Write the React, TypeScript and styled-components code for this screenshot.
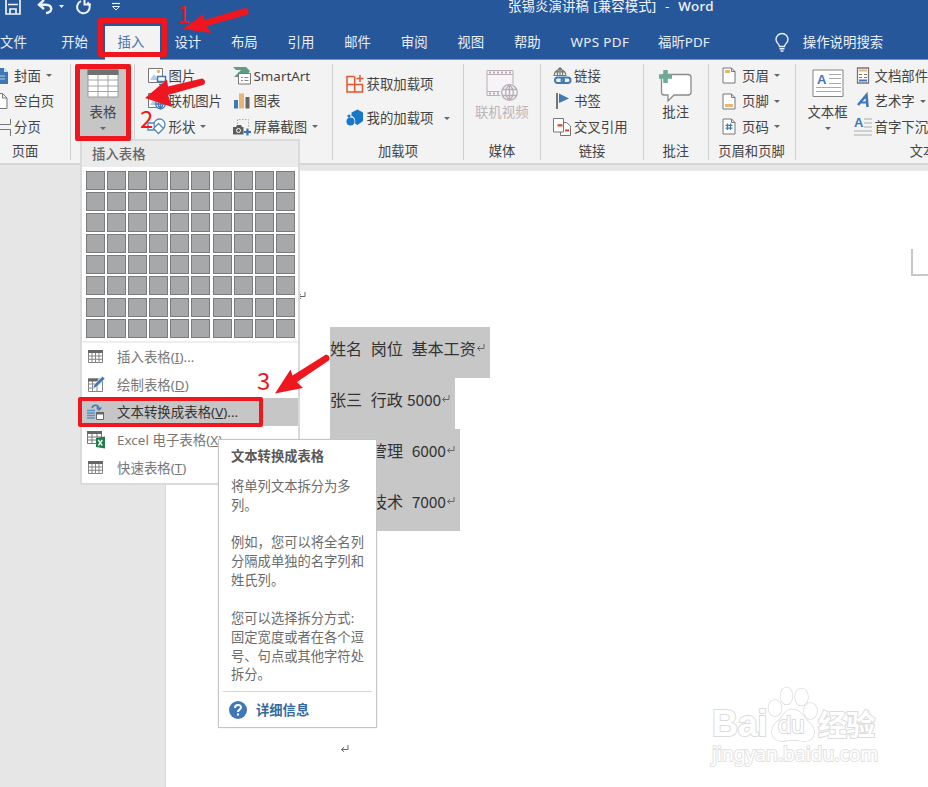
import React from "react";
import styled, { createGlobalStyle } from "styled-components";

const Global = createGlobalStyle`
  *, *::before, *::after { box-sizing: border-box; }
  body { margin: 0; overflow: hidden; }
  svg { display: block; flex: none; overflow: visible; }
`;

const Window = styled.div`
  position: relative;
  width: 928px;
  height: 787px;
  overflow: hidden;
  display: flex;
  flex-direction: column;
  background: #e6e6e6;
  color: #444;
  font: 13.4px/18px "Noto Sans", "Noto Sans CJK SC", sans-serif;
  white-space: nowrap;
`;

/* ---------- header ---------- */
const TitleBar = styled.header`
  height: 24px;
  flex: none;
  display: flex;
  background: #27579b;
  color: #f1f5fa;
`;
const QuickAccess = styled.div`
  width: 508px;
  padding-left: 5px;
`;
const Title = styled.div`
  padding-top: 0;
  font-size: 13.4px;
  line-height: 12px;
  letter-spacing: 0.1px;
  word-spacing: 0.8px;
`;
const AppName = styled.span`
  font-weight: 500;
  letter-spacing: 0.4px;
`;
const TabRow = styled.nav`
  height: 36px;
  flex: none;
  display: flex;
  padding-top: 2px;
  background: #27579b;
  border-bottom: 1px solid #7896c3;
`;
const Tab = styled.div<{ $w?: number; $first?: boolean; $active?: boolean; $track?: number }>`
  width: ${(p) => p.$w ?? 56.6}px;
  height: 34px;
  padding: 7px 0 0 ${(p) => (p.$first ? 0 : 14.2)}px;
  letter-spacing: ${(p) => p.$track ?? 0}px;
  ${(p) => p.$active && "width: 55px; margin-left: 1px; margin-right: .6px; padding-left: 13px;"}
  color: ${(p) => (p.$active ? "#4a73ae" : "#e8eff8")};
  background: ${(p) => (p.$active ? "#f3f3f3" : "transparent")};
`;
const Search = styled.div`
  display: flex;
  gap: 14px;
  margin-left: 44.5px;
  color: #eef3fa;
  padding-top: 7px;
`;

/* ---------- ribbon ---------- */
const Ribbon = styled.section`
  height: 105px;
  flex: none;
  display: flex;
  padding-top: 4px;
  background: #f3f3f3;
  border-bottom: 2px solid #d6d6d6;
`;
const Group = styled.div<{ $w: number }>`
  width: ${(p) => p.$w}px;
  height: 96px;
  flex: none;
  display: flex;
  flex-direction: column;
  border-right: 1.5px solid #d0d0d0;
`;
const GroupBody = styled.div<{ $pad?: number }>`
  height: 80px;
  display: flex;
  padding-left: ${(p) => p.$pad ?? 0}px;
`;
const GroupLabel = styled.div<{ $shift?: number }>`
  text-align: center;
  font-size: 13.3px;
  text-indent: ${(p) => p.$shift ?? 0}px;
`;
const Stack = styled.div<{ $w?: number; $pitch?: number; $top?: number; $left?: number }>`
  display: grid;
  grid-auto-rows: ${(p) => p.$pitch ?? 25.5}px;
  width: ${(p) => (p.$w ? p.$w + "px" : "auto")};
  padding-top: ${(p) => p.$top ?? 0}px;
  padding-left: ${(p) => p.$left ?? 0}px;
  align-content: start;
`;
const Cmd = styled.div<{ $icon?: number }>`
  display: flex;
  align-items: center;
  padding-bottom: 2px;
  & > svg:first-child { margin-right: ${(p) => p.$icon ?? 3}px; }
`;
const BigButton = styled.div<{ $w: number; $active?: boolean; $disabled?: boolean }>`
  width: ${(p) => p.$w}px;
  height: 76px;
  padding-top: 5px;
  display: flex;
  flex-direction: column;
  align-items: center;
  color: ${(p) => (p.$disabled ? "#b9b5b8" : "#444")};
  background: ${(p) => (p.$active ? "#c6c6c6" : "transparent")};
  & > svg:first-child { height: 36px; margin-bottom: -2px; }
`;
const Caret = styled.i<{ $gap?: number }>`
  border: 3px solid transparent;
  border-top: 3.5px solid #666;
  border-bottom: 0;
  margin-left: ${(p) => p.$gap ?? 5}px;
`;
const DownCaret = styled(Caret)`
  margin: 6px 0 0;
`;

/* ---------- document ---------- */
const Workspace = styled.main`
  flex: 1;
  padding: 5px 0 0 165px;
`;
const Page = styled.article`
  height: 100%;
  padding: 156px 0 0 164px;
  background: #fff;
  border-left: 1px solid #d9d9d9;
  border-top: 1px solid #ececec;
  color: #333;
  font: 16.1px/24px "Noto Sans CJK SC", sans-serif;
`;
const Line = styled.div<{ $w: number; $indent?: number }>`
  width: ${(p) => p.$w}px;
  height: 51px;
  display: flex;
  align-items: flex-start;
  gap: 8.5px;
  padding: 8.5px 0 0 ${(p) => p.$indent ?? 0}px;
  background: #c7c7c7;
`;
const Amount = styled.span<{ $pull?: boolean }>`
  display: flex;
  align-items: center;
  margin-left: ${(p) => (p.$pull ? -4.5 : 0)}px;
`;
const Digits = styled.span`
  font: 15.6px/24px "Noto Sans CJK SC", sans-serif;
  letter-spacing: -0.1px;
`;
const LastMark = styled.div`
  padding: 213px 0 0 10px;
`;

/* ---------- dropdown ---------- */
const Menu = styled.section`
  position: absolute;
  left: 80px;
  top: 139px;
  width: 220px;
  height: 346px;
  background: #fff;
  border: 2px solid #dadada;
  color: #777;
`;
const MenuHead = styled.h2`
  margin: 0;
  height: 26px;
  padding: 4px 0 0 10px;
  background: #ebebeb;
  color: #666;
  font-size: 13.4px;
  line-height: 18px;
  font-weight: 500;
`;
const Cells = styled.div`
  display: grid;
  grid-template-columns: repeat(10, 19px);
  grid-auto-rows: 19px;
  gap: 2.1px;
  height: 176px;
  padding: 4px 0 0 4px;
  border-bottom: 2px solid #eee;
`;
const Cell = styled.i`
  background: #a7a8aa;
  border: 1.5px solid #7b7b7c;
`;
const MenuItem = styled.div<{ $on?: boolean }>`
  height: 27.7px;
  display: flex;
  align-items: center;
  padding-left: 5px;
  gap: 13px;
  background: ${(p) => (p.$on ? "#c6c6c6" : "#fff")};
  color: ${(p) => (p.$on ? "#333" : "#777")};
  u { text-underline-offset: 1px; text-decoration-thickness: 1px; }
`;
const MenuText = styled.span`
  letter-spacing: 0.05px;
`;

/* ---------- tooltip ---------- */
const Tip = styled.aside`
  position: absolute;
  left: 218px;
  top: 439px;
  width: 159px;
  height: 289px;
  padding: 7px 4px 0;
  background: #fff;
  border: 1px solid #c4c4c4;
  box-shadow: 0 0 1px #ccc;
  color: #6b6b6b;
  line-height: 18.85px;
  font-size: 13.3px;
`;
const TipTitle = styled.h3`
  margin: 0 0 11px 8px;
  font-size: 13.3px;
  line-height: 19px;
  font-weight: 600;
  color: #595959;
`;
const TipText = styled.p`
  margin: 0 0 18.8px 8px;
`;
const TipFoot = styled.div`
  display: flex;
  align-items: center;
  gap: 9px;
  height: 37px;
  margin-top: -12px;
  padding-left: 6px;
  border-top: 1px solid #d8d8d8;
  color: #35689f;
  font-weight: 700;
`;

/* ---------- annotations ---------- */
const Marker = styled.div<{ $x: number; $y: number; $w: number; $h: number; $b?: number }>`
  position: absolute;
  left: ${(p) => p.$x}px;
  top: ${(p) => p.$y}px;
  width: ${(p) => p.$w}px;
  height: ${(p) => p.$h}px;
  border: ${(p) => p.$b ?? 4}px solid #ee1720;
  border-radius: 2px;
`;
const Step = styled.span<{ $x: number; $y: number }>`
  position: absolute;
  left: ${(p) => p.$x}px;
  top: ${(p) => p.$y}px;
  color: #ee1720;
  font: 24px/24px "Noto Sans CJK SC", sans-serif;
`;
const Arrows = styled.svg`
  position: absolute;
  left: 0;
  top: 0;
`;
const StrayMark = styled.div`
  position: absolute;
  left: 297px;
  top: 291px;
`;
const Corner = styled.div`
  position: absolute;
  right: 0;
  top: 249px;
  width: 17px;
  height: 27px;
  border-left: 2px solid #c8c8c8;
  border-bottom: 2px solid #c8c8c8;
`;
const Watermark = styled.div`
  position: absolute;
  left: 712px;
  top: 686px;
  width: 170px;
  height: 82px;
  color: #fff;
  -webkit-text-stroke: 2px #dcdcdc;
  paint-order: stroke fill;
`;
const Brand = styled.div`
  display: flex;
  height: 56px;
  padding-top: 18px;
  font: 700 36px/40px "Liberation Sans", sans-serif;
`;
const Bai = styled.span`
  width: 58px;
  letter-spacing: -0.3px;
`;
const Paw = styled.span`
  position: relative;
  width: 48px;
`;
const PawArt = styled.svg`
  position: absolute;
  left: -2px;
  top: -18px;
`;
const Du = styled.span`
  position: absolute;
  left: 8px;
  top: 3px;
  font-size: 24px;
  line-height: 36px;
  font-weight: 400;
`;
const Jingyan = styled.span`
  font: 700 29px/38px "Noto Sans CJK SC", sans-serif;
  letter-spacing: -0.8px;
`;
const Site = styled.div`
  font: 19.2px/24px "Noto Sans", sans-serif;
  -webkit-text-stroke-color: #e2e2e2;
`;

/* ---------- icons ---------- */
const Ret = () => (
  <svg width="10" height="10" viewBox="0 0 10 10" fill="none" stroke="#666" strokeWidth="1">
    <path d="M8 1v4.5H1.5M4 3.2 1.5 5.5 4 7.8" />
  </svg>
);
const TableIcon = () => (
  <svg width="17" height="15" viewBox="0 0 17 15">
    <path d="M1.5 1.5h14v12h-14zM1.5 7h14M1.5 10.3h14M5 3v10.5M8.5 3v10.5M12 3v10.5" fill="#fff" stroke="#858585" strokeWidth="1" />
    <path d="M1 1h15v3H1z" fill="#666" />
  </svg>
);
const DrawIcon = () => (
  <svg width="17" height="17" viewBox="0 0 17 17">
    <path d="M1.5 3h14v12.5h-14zM1.5 8h9M1.5 12h6M5.5 5v10M10 9v6.5" fill="#fff" stroke="#858585" />
    <path d="M1 2.5h10v3H1z" fill="#666" />
    <path d="m6 12.500 1-3.800 8.500-8.500 2.500 2.500-8.500 8.300z" fill="#4179b5" stroke="#fff" strokeWidth=".6" />
  </svg>
);
const ConvertIcon = () => (
  <svg width="17" height="17" viewBox="0 0 17 17" fill="none">
    <path d="M0 6.5h8M0 9h8M0 11.5h8M0 14h8" stroke="#5c8ec4" strokeWidth="1.4" />
    <path d="M5 4C6 .5 11 .3 12 4.5M9.7 3.5 12 6l2.4-2.5" stroke="#4179b5" strokeWidth="1.5" />
    <path d="M9.5 8.500h7v7h-7z" fill="#fff" stroke="#666" />
    <path d="M9 8h8v2.500H9z" fill="#666" />
  </svg>
);
const ExcelIcon = () => (
  <svg width="17" height="17" viewBox="0 0 17 17">
    <path d="M.5 1.500h14v11H.5zM.5 6h14M.5 9h10M5 3v9M10 3v9" fill="#fff" stroke="#777" />
    <path d="M0 0h15v3H0z" fill="#666" />
    <path d="m9 7 9-1.500v12L9 16z" fill="#217d4b" />
    <path d="m11.300 9 4 5.500M15.300 9l-4 5.500" stroke="#fff" strokeWidth="1.300" />
  </svg>
);
const BigTable = () => (
  <svg width="32" height="36" viewBox="0 0 32 36">
    <path d="M1 1h30v27H1z" fill="#fff" stroke="#999" />
    <path d="M1 11h30M1 17h30M1 22.500h30M11 5v23M21 5v23" stroke="#a4a4a4" />
    <path d="M.5.5h31V6H.5z" fill="#717171" />
  </svg>
);
const Cover = () => (
  <svg width="9" height="18" viewBox="8 0 9 18">
    <path d="M8 1h4l4 4v12H8z" fill="#3f78b5" />
    <path d="M12 1v4h4" fill="#d8e5f3" />
    <path d="M8 9h5M8 12h5" stroke="#b9d0e8" />
  </svg>
);
const Blank = () => (
  <svg width="9" height="18" viewBox="8 0 9 18" fill="#fff" stroke="#777">
    <path d="M8 1.500h2.500L15 6v10.500H8M10.500 1.500V6H15" />
  </svg>
);
const Break = () => (
  <svg width="12" height="18" viewBox="0 0 12 18" fill="none" stroke="#777">
    <path d="M0 6.500h10.500V1M0 11.500h10.500V18" />
  </svg>
);
const Picture = () => (
  <svg width="20" height="18" viewBox="0 0 20 18">
    <path d="M1.500 1.500h14v14h-14z" fill="#fff" stroke="#777" />
    <path d="m3 13 4-6 4 6z" fill="#b4cde3" />
    <circle cx="11.500" cy="4.500" r="1.700" fill="#e9b66d" />
    <path d="M10.500 9.500h8v5h-8zM12 17.500h5" fill="#fff" stroke="#3f78b5" strokeWidth="1.500" />
  </svg>
);
const OnlinePicture = () => (
  <svg width="20" height="18" viewBox="0 0 20 18">
    <path d="M1.500 1.500h14v14h-14z" fill="#fff" stroke="#777" />
    <path d="m3 13 4-6 4 6z" fill="#b4cde3" />
    <g fill="#fff" stroke="#3f78b5" strokeWidth="1.300">
      <circle cx="13.500" cy="12" r="4.800" />
      <path d="M8.700 12h9.600M13.500 7.200v9.600M13.500 7.200c-3 3-3 6.600 0 9.600 3-3 3-6.600 0-9.600" />
    </g>
  </svg>
);
const Shapes = () => (
  <svg width="20" height="18" viewBox="0 0 20 18" fill="#fff" stroke="#4f87c0" strokeWidth="1.300">
    <path d="M1 5h7v7H1z" />
    <circle cx="12.500" cy="6.500" r="5.500" />
    <path d="m11.500 5.500 5 5-5 5-5-5z" />
  </svg>
);
const SmartArt = () => (
  <svg width="18" height="18" viewBox="0 0 18 18">
    <path d="M0 0h13l4 4-1.500 2H5l3-3H3z" fill="#5e9c85" />
    <path d="m1 10 5-5v5z" fill="#5e9c85" />
    <path d="M5.500 6.500h12v10.500h-12z" fill="#fff" stroke="#777" />
    <path d="M8 10.500h2m1.500 0h4M8 13.500h2m1.500 0h4" stroke="#888" />
  </svg>
);
const Chart = () => (
  <svg width="18" height="18" viewBox="0 0 18 18">
    <path d="M1 8h4v8.500H1z" fill="#3f78b5" />
    <path d="M6 1.500h5v15H6z" fill="#e7b676" />
    <path d="M12.500 5h4v11.500h-4z" fill="#666" />
  </svg>
);
const Screenshot = () => (
  <svg width="18" height="18" viewBox="0 0 18 18">
    <path d="M4.500 6V1.500h11V9" fill="none" stroke="#aaa" strokeDasharray="1.500 1.500" />
    <path d="M0 9h3l1-2h4l1 2h1.500v7.500H0z" fill="#5e5e5e" />
    <circle cx="5.500" cy="12.500" r="2" fill="#5e5e5e" stroke="#fff" />
    <path d="M14.500 10.500v7M11 14h7" stroke="#3272b5" strokeWidth="2.200" />
  </svg>
);
const GetAddins = () => (
  <svg width="18" height="18" viewBox="0 0 18 18" fill="none" stroke="#df5831" strokeWidth="1.500">
    <path d="M8.500 1.500H1v15.500h15.500V9.500H1M8.700 1.500V17M14 0v7M10.500 3.500h7" />
  </svg>
);
const MyAddins = () => (
  <svg width="18" height="18" viewBox="0 0 18 18" fill="#1777c8">
    <path d="M5.500 3.500 11.500.500 17 3.500v8.500l-5.500 4L9 14.500C10 10 8 7.500 5.500 7z" />
    <circle cx="4.500" cy="12.500" r="4" />
    <circle cx="3" cy="7" r="1.600" />
  </svg>
);
const Video = () => (
  <svg width="32" height="36" viewBox="0 0 32 36" fill="#f7f3f7" stroke="#b9aeb7">
    <path d="M1 1.500h26v25H1zM1 5.500h26M1 22.500h26" />
    <path d="M3 3.500h23M3 24.500h12" strokeDasharray="2 2" strokeWidth="2" />
    <circle cx="23" cy="23.500" r="9" stroke="#f3f3f3" fill="#f3f3f3" />
    <g strokeWidth="1.300">
      <circle cx="23.500" cy="23.500" r="7.800" />
      <path d="M16.500 20.500h14M16.500 26.500h14M23.500 16v15M23.500 16c-5 4-5 11 0 15 5-4 5-11 0-15" fill="none" />
    </g>
  </svg>
);
const LinkIcon = () => (
  <svg width="18" height="18" viewBox="0 0 18 18" fill="none">
    <g stroke="#777" strokeWidth="1.200">
      <path d="M1 9a6 6.500 0 1 1 12 0M1 8.500h12M1.800 4.800h10.400M7 0v9M7 .5C4 3 4 6 4.500 9M7 .5C10 3 10 6 9.500 9" />
    </g>
    <path d="M1.500 9h17v8h-17z" fill="#f3f3f3" />
    <g stroke="#3f78b5" strokeWidth="2">
      <rect x="2" y="10.500" width="9" height="5.500" rx="2.700" />
      <rect x="8.500" y="10.500" width="9" height="5.500" rx="2.700" />
    </g>
  </svg>
);
const Flag = () => (
  <svg width="18" height="18" viewBox="0 0 18 18">
    <path d="M4 1v16" stroke="#555" strokeWidth="1.600" />
    <path d="m6 1.500 10 5L6 11z" fill="#3f78b5" />
  </svg>
);
const CrossRef = () => (
  <svg width="18" height="18" viewBox="0 0 18 18" fill="#fff" stroke="#777">
    <path d="M7.500 4.500h6l4 3.500v9.500h-10z" />
    <path d="M.5.5h10V14H.500z" />
    <path d="M4.500 7.300h5M12 12.500h4" stroke="#d94c24" strokeWidth="2.200" />
  </svg>
);
const Comment = () => (
  <svg width="34" height="36" viewBox="0 0 34 36">
    <path d="M5 5.500h24q3 0 3 3V23q0 3-3 3H15l-6 6v-6H5q-2.500 0-2.500-3V8.500q0-3 2.500-3z" fill="#fff" stroke="#8a8a8a" strokeWidth="1.300" />
    <path d="M6.500 1v13M0 7.500h13" stroke="#6faa94" strokeWidth="4.500" />
  </svg>
);
const PageIcon = ({ kind }: { kind: "head" | "foot" | "num" }) => (
  <svg width="14" height="17" viewBox="0 0 14 17">
    <path d="M1 1h8.500L13 4.500V16H1zM9.500 1v3.500H13" fill="#fff" stroke="#777" />
    {kind === "head" && <path d="M3 3h5v3H3z" fill="#e9b66d" />}
    {kind === "foot" && <path d="M3 11h8v3H3z" fill="#e9b66d" />}
    {kind === "num" && <path d="M5.500 5.500v6.500M8.500 5.500v6.500M3.500 7.300h7M3.500 10.200h7" stroke="#3f78b5" strokeWidth="1.200" />}
  </svg>
);
const SvgLetter = styled.text`
  font: bold 13px "Liberation Sans", sans-serif;
  fill: #4179b5;
`;
const TextBox = () => (
  <svg width="32" height="36" viewBox="0 0 32 36">
    <path d="M1 1h30v26.500H1z" fill="#fff" stroke="#858585" />
    <path d="M17 5.500h12M17 9.500h12M17 14.500h12M4 18.500h25M4 22.500h25" stroke="#aaa" />
    <SvgLetter x="5" y="15">A</SvgLetter>
  </svg>
);
const Parts = () => (
  <svg width="18" height="18" viewBox="0 0 18 18">
    <path d="M3.500 1h11v15h-11z" fill="#fff" stroke="#777" strokeWidth="1.300" />
    <path d="M5 3.500h8" stroke="#e9b66d" strokeWidth="2" />
    <path d="M5 7.500h3m2 0h3m-8 3h3m2 0h3" stroke="#777" />
    <path d="M5 13.500h8" stroke="#3f78b5" strokeWidth="2" />
  </svg>
);
const WordArt = () => (
  <svg width="18" height="18" viewBox="0 0 18 18" fill="none" stroke="#3f78b5">
    <path d="m4 13 8.500-10L13.500 15" strokeWidth="2.600" />
    <path d="M7 10.500h6" strokeWidth="2" />
  </svg>
);
const DropCap = () => (
  <svg width="18" height="18" viewBox="0 0 18 18">
    <SvgLetter x="0" y="9">A</SvgLetter>
    <path d="M10 1h8M10 5h8M10 9h8M0 13h18M0 17h18" stroke="#aaa" />
  </svg>
);

const tableMenu = [
  { icon: <TableIcon />, label: "插入表格", k: "I", dots: true },
  { icon: <DrawIcon />, label: "绘制表格", k: "D" },
  { icon: <ConvertIcon />, label: "文本转换成表格", k: "V", dots: true, on: true },
  { icon: <ExcelIcon />, label: "Excel 电子表格", k: "X" },
  { icon: <TableIcon />, label: "快速表格", k: "T" },
];

export default function App() {
  return (
    <Window>
      <Global />
      <TitleBar>
        <QuickAccess>
          <svg width="120" height="20" viewBox="0 0 120 20" fill="none" stroke="#eef3fa" strokeWidth="1.700">
            <path d="M1 0v14h14V0M3 4.500h10M5 14V9h6v5" />
            <path d="M39 0l-5 4.700 5 4.300M34 4.700h7c7 0 7 8.300 0 8.300" strokeWidth="2.400" />
            <path d="m54 5 5 0-2.500 3z" fill="#eef3fa" stroke="none" />
            <path d="M76 1.200a6.300 6.300 0 1 0 6.500 1M79.500 -1v5.500H86" strokeWidth="2" />
            <path d="M107 3.500h8" strokeWidth="1.200" />
            <path d="M107.500 6.500h7L111 10z" strokeWidth="1" />
          </svg>
        </QuickAccess>
        <Title>张锡炎演讲稿 [兼容模式]&nbsp; -&nbsp; <AppName>Word</AppName></Title>
      </TitleBar>
      <TabRow>
        <Tab $w={47} $first>文件</Tab>
        <Tab>开始</Tab>
        <Tab $active>插入</Tab>
        {["设计", "布局", "引用", "邮件", "审阅", "视图", "帮助"].map((t) => (
          <Tab key={t}>{t}</Tab>
        ))}
        <Tab $w={87.500} $track={0.350}>WPS PDF</Tab>
        <Tab $w={86.500}>福昕PDF</Tab>
        <Search>
          <svg width="14" height="20" viewBox="0 0 14 20" fill="none" stroke="#e8eff8" strokeWidth="1.400">
            <path d="M4.500 13.500C4.500 11 1 10 1 6.500a6 6 0 0 1 12 0c0 3.500-3.500 4.500-3.500 7zM4.500 15.700h5M5.500 18h3" />
          </svg>
          操作说明搜索
        </Search>
      </TabRow>

      <Ribbon>
        <Group $w={71}>
          <GroupBody>
            <Stack>
              <Cmd $icon={5}><Cover />封面<Caret /></Cmd>
              <Cmd $icon={5}><Blank />空白页</Cmd>
              <Cmd $icon={2}><Break />分页</Cmd>
            </Stack>
          </GroupBody>
          <GroupLabel $shift={-20}>页面</GroupLabel>
        </Group>
        <Group $w={64}>
          <GroupBody $pad={4.500}>
            <BigButton $w={55} $active><BigTable />表格<DownCaret /></BigButton>
          </GroupBody>
        </Group>
        <Group $w={198}>
          <GroupBody $pad={11.500}>
            <Stack $w={86}>
              <Cmd $icon={2}><Picture />图片</Cmd>
              <Cmd $icon={2}><OnlinePicture />联机图片</Cmd>
              <Cmd $icon={2}><Shapes />形状<Caret /></Cmd>
            </Stack>
            <Stack>
              <Cmd $icon={3}><SmartArt />SmartArt</Cmd>
              <Cmd $icon={3}><Chart />图表</Cmd>
              <Cmd $icon={3}><Screenshot />屏幕截图<Caret /></Cmd>
            </Stack>
          </GroupBody>
        </Group>
        <Group $w={131}>
          <GroupBody $pad={12.500}>
            <Stack $pitch={34} $top={4}>
              <Cmd $icon={3}><GetAddins />获取加载项</Cmd>
              <Cmd $icon={3}><MyAddins />我的加载项<Caret $gap={11} /></Cmd>
            </Stack>
          </GroupBody>
          <GroupLabel>加载项</GroupLabel>
        </Group>
        <Group $w={77}>
          <GroupBody>
            <BigButton $w={75.500} $disabled><Video />联机视频</BigButton>
          </GroupBody>
          <GroupLabel>媒体</GroupLabel>
        </Group>
        <Group $w={103}>
          <GroupBody $pad={12}>
            <Stack>
              <Cmd><LinkIcon />链接</Cmd>
              <Cmd><Flag />书签</Cmd>
              <Cmd><CrossRef />交叉引用</Cmd>
            </Stack>
          </GroupBody>
          <GroupLabel>链接</GroupLabel>
        </Group>
        <Group $w={64.500}>
          <GroupBody>
            <BigButton $w={64}><Comment />批注</BigButton>
          </GroupBody>
          <GroupLabel>批注</GroupLabel>
        </Group>
        <Group $w={87}>
          <GroupBody $pad={13.500}>
            <Stack>
              <Cmd $icon={6}><PageIcon kind="head" />页眉<Caret /></Cmd>
              <Cmd $icon={6}><PageIcon kind="foot" />页脚<Caret /></Cmd>
              <Cmd $icon={6}><PageIcon kind="num" />页码<Caret /></Cmd>
            </Stack>
          </GroupBody>
          <GroupLabel>页眉和页脚</GroupLabel>
        </Group>
        <Group $w={256}>
          <GroupBody $pad={9}>
            <BigButton $w={46}><TextBox />文本框<DownCaret /></BigButton>
            <Stack $left={3}>
              <Cmd $icon={3}><Parts />文档部件</Cmd>
              <Cmd $icon={3}><WordArt />艺术字<Caret /></Cmd>
              <Cmd $icon={3}><DropCap />首字下沉</Cmd>
            </Stack>
          </GroupBody>
          <GroupLabel>文本</GroupLabel>
        </Group>
      </Ribbon>

      <Workspace>
        <Page>
          <Line $w={159.500}><span>姓名</span><span>岗位</span><Amount>基本工资<Ret /></Amount></Line>
          <Line $w={125}><span>张三</span><span>行政</span><Amount $pull><Digits>5000</Digits><Ret /></Amount></Line>
          <Line $w={129.500} $indent={41}><span>管理</span><Amount><Digits>6000</Digits><Ret /></Amount></Line>
          <Line $w={129.500} $indent={41}><span>技术</span><Amount><Digits>7000</Digits><Ret /></Amount></Line>
          <LastMark><Ret /></LastMark>
        </Page>
      </Workspace>

      <Corner />
      <StrayMark><Ret /></StrayMark>

      <Menu>
        <MenuHead>插入表格</MenuHead>
        <Cells>{Array.from({ length: 80 }, (_, i) => <Cell key={i} />)}</Cells>
        {tableMenu.map((m) => (
          <MenuItem key={m.label} $on={m.on}>
            {m.icon}
            <MenuText>{m.label}(<u>{m.k}</u>){m.dots && "..."}</MenuText>
          </MenuItem>
        ))}
      </Menu>

      <Tip>
        <TipTitle>文本转换成表格</TipTitle>
        <TipText>将单列文本拆分为多<br />列。</TipText>
        <TipText>例如，您可以将全名列<br />分隔成单独的名字列和<br />姓氏列。</TipText>
        <TipText>您可以选择拆分方式:<br />固定宽度或者在各个逗<br />号、句点或其他字符处<br />拆分。</TipText>
        <TipFoot>
          <svg width="18" height="18" viewBox="0 0 18 18">
            <circle cx="9" cy="9" r="9" fill="#3f78b5" />
            <path d="M6 7c0-4 6-4 6-.500C12 8.500 9 8.500 9 11M9 12.500v2" fill="none" stroke="#fff" strokeWidth="2" />
          </svg>
          详细信息
        </TipFoot>
      </Tip>

      <Marker $x={98} $y={18} $w={68.500} $h={39} $b={5} />
      <Marker $x={74.500} $y={64} $w={56.500} $h={77} $b={5} />
      <Marker $x={78} $y={397} $w={185} $h={30} />
      <Arrows width="928" height="500" viewBox="0 0 928 500" fill="#ee1720">
        <path d="M183 29 203.500 14 204.500 20 245 8q3 0 3.500 3t-2 4L207 26l4 7z" />
        <path d="m145 98 22-18.500 1 7L202 78.500q3 1 3 3.500t-2 3L168 95l4 12z" />
        <path d="m275 393.500 15.500-24 2 6L326 354.500q3 .500 3.500 3t-1.500 3.500L297 382l6 6z" />
      </Arrows>
      <Step $x={177} $y={1}>1</Step>
      <Step $x={140} $y={106}>2</Step>
      <Step $x={257} $y={368}>3</Step>

      <Watermark>
        <Brand>
          <Bai>Bai</Bai>
          <Paw>
            <PawArt width="52" height="56" viewBox="0 0 52 56" fill="#fff" stroke="#dcdcdc" strokeWidth="1.500">
              <ellipse cx="7" cy="22" rx="6.500" ry="8" />
              <ellipse cx="18.500" cy="10" rx="6" ry="8.500" />
              <ellipse cx="33.500" cy="11" rx="6.500" ry="8.500" />
              <ellipse cx="42.500" cy="25" rx="6.500" ry="8" />
              <path d="M24.500 23.500c8 0 10 6 14 10.500s8 7 7.500 13-5 8.500-10 8-8-1-11.500-1-7 1-11.500 1-9-3-9-9 3.500-8.500 7.500-12.500 6-10 13-10z" />
            </PawArt>
            <Du>du</Du>
          </Paw>
          <Jingyan>经验</Jingyan>
        </Brand>
        <Site>jingyan.baidu.com</Site>
      </Watermark>
    </Window>
  );
}
